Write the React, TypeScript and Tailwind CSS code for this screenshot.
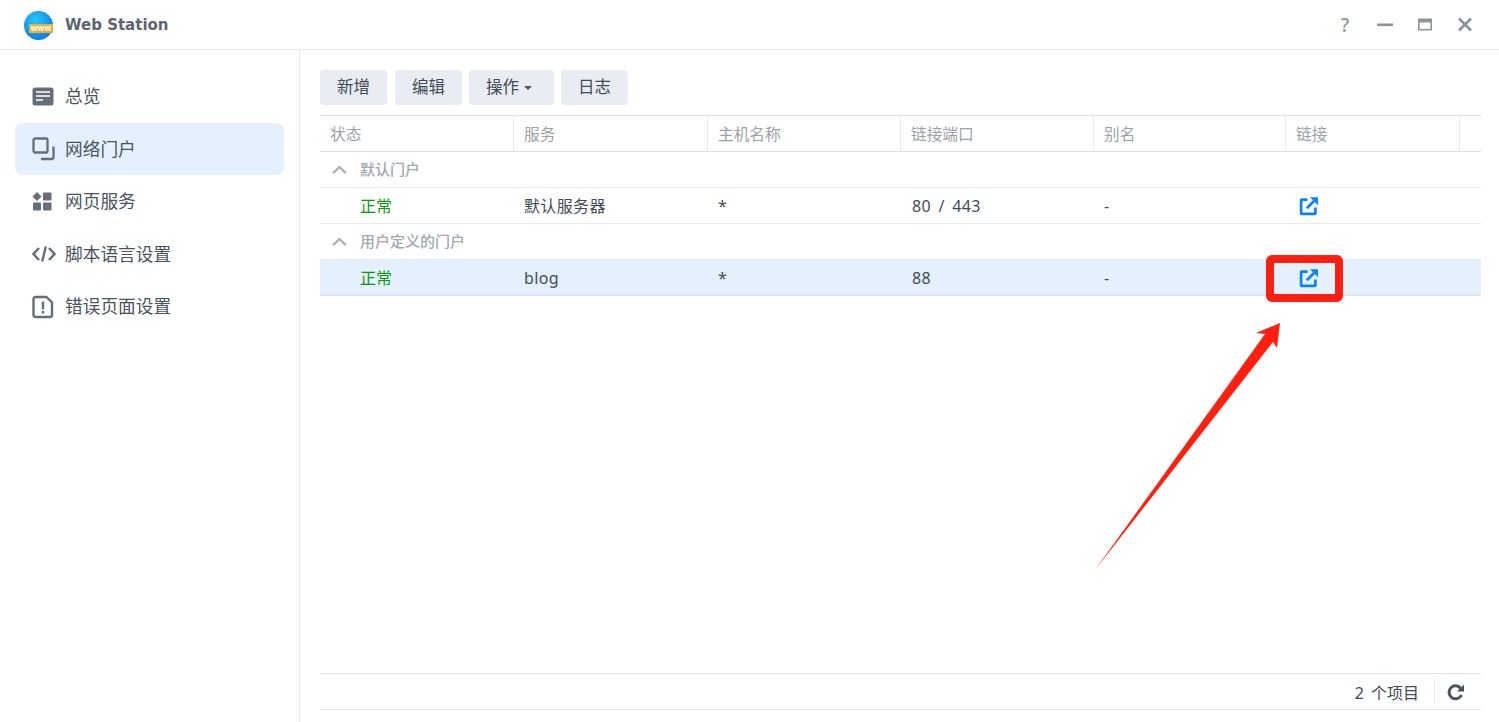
const cjk = "font-['Noto_Sans','Noto_Sans_CJK_SC',sans-serif]";

const columns = [
  { label: "状态", width: "w-[194px]" },
  { label: "服务", width: "w-[194px]" },
  { label: "主机名称", width: "w-[193px]" },
  { label: "链接端口", width: "w-[193px]" },
  { label: "别名", width: "w-[192px]" },
  { label: "链接", width: "w-[174px]" },
];

const rowCols = ["w-[194px] pl-10", "w-[194px] pl-[10px]", "w-[193px] pl-[10px]", "w-[193px] pl-[11px]", "w-[192px] pl-[10px]"];

function LinkIcon() {
  return (
    <svg width="20" height="20" viewBox="0 0 20 20" fill="none" stroke="#0a84f0" strokeWidth="2.7">
      <path d="M8.5 3.6H2.8a.7.7 0 0 0-.7.7v12.9a.7.7 0 0 0 .7.7h12.9a.7.7 0 0 0 .7-.7V11.5" strokeLinejoin="round" />
      <path d="M7.8 12.2 15 5" />
      <path d="M11 1.2H19V9.2Z" fill="#0a84f0" stroke="none" />
    </svg>
  );
}

function Chevron() {
  return (
    <svg width="15" height="9" viewBox="0 0 15 9" fill="none" stroke="#a9aeb5" strokeWidth="2.2">
      <path d="M1 8.2 7.5 2l6.5 6.2" />
    </svg>
  );
}

function GroupRow({ label }: { label: string }) {
  return (
    <div className="flex h-9 items-center border-b border-[#e8ebef] pl-[12px]">
      <Chevron />
      <span className="ml-[13px] text-[15px] font-medium text-[#a3a8af]">{label}</span>
    </div>
  );
}

function DataRow({ cells, selected }: { cells: string[]; selected?: boolean }) {
  return (
    <div className={`flex h-9 items-center border-b ${selected ? "border-[#d9e2ec] bg-[#e4f1fd]" : "border-[#e8ebef]"}`}>
      {cells.map((cell, i) => (
        <div
          key={i}
          className={`${rowCols[i]} ${i === 0 ? "text-[#0a9a0a]" : "tracking-[0.35px] text-[#414b55] [word-spacing:3px]"} text-[16px]`}
        >
          {cell}
        </div>
      ))}
      <div className="flex pl-[13px]">
        <LinkIcon />
      </div>
    </div>
  );
}

const navItems: { label: string; icon: React.ReactNode; active?: boolean }[] = [
  {
    label: "总览",
    icon: (
      <svg width="22" height="20" viewBox="0 0 22 20">
        <rect x="0.5" y="0.5" width="21" height="18" rx="2.5" fill="#666e79" />
        <path d="M4 5h14M4 9h14M4 13h7" stroke="#fff" strokeWidth="1.6" />
      </svg>
    ),
  },
  {
    label: "网络门户",
    active: true,
    icon: (
      <svg width="24" height="24" viewBox="0 0 24 24" fill="none" stroke="#666e79" strokeWidth="2.3">
        <rect x="1.5" y="1.5" width="14" height="14" rx="1.5" />
        <path d="M21.5 9.5v10.5a2 2 0 0 1-2 2H9" />
      </svg>
    ),
  },
  {
    label: "网页服务",
    icon: (
      <svg width="20" height="20" viewBox="0 0 20 20" fill="#666e79">
        <path d="M5 0 9.5 4.5 5 9 .5 4.5Z" />
        <rect x="11" y="0.5" width="8.5" height="8" rx="1" />
        <rect x="1" y="10.5" width="8" height="8" rx="1" />
        <rect x="11" y="10.5" width="8.5" height="8" rx="1" />
      </svg>
    ),
  },
  {
    label: "脚本语言设置",
    icon: (
      <svg width="24" height="18" viewBox="0 0 24 18" fill="none" stroke="#666e79" strokeWidth="2.4">
        <path d="M7 3 1.5 9 7 15M17 3l5.5 6L17 15M13.8 1.5 10.2 16.5" />
      </svg>
    ),
  },
  {
    label: "错误页面设置",
    icon: (
      <svg width="22" height="24" viewBox="0 0 22 24" fill="none" stroke="#666e79" strokeWidth="2.4">
        <path d="M3.5 2h11L20 7.5V20a2 2 0 0 1-2 2H3.5a2 2 0 0 1-2-2V4a2 2 0 0 1 2-2Z" strokeLinejoin="round" />
        <path d="M11 6.5v8" />
        <path d="M11 16v2.5" />
      </svg>
    ),
  },
];

export default function App() {
  return (
    <div className={`relative flex h-[722px] w-[1499px] flex-col overflow-hidden bg-white ${cjk}`}>
      {/* title bar */}
      <div className="flex h-[50px] shrink-0 items-center border-b border-[#e6e8eb] pl-6 pr-[24px] pt-px">
        <div className="relative h-[29px] w-[29px] rounded-full bg-[radial-gradient(circle_at_40%_30%,#22c8f8,#0a7fe8_75%)]">
          <div className="absolute left-[5px] top-[13px] flex h-[9px] w-[24px] items-center justify-center bg-[#f5ae2c] text-[8px] font-bold leading-none text-white">
            www
          </div>
        </div>
        <span className="ml-3 font-['DejaVu_Sans',sans-serif] text-[15px] font-bold text-[#5b6470]">Web Station</span>
        <div className="ml-auto flex items-center gap-[20px]">
          <span className="flex h-5 w-5 items-center justify-center text-[19px] font-medium leading-none text-[#8d949c]">?</span>
          <svg width="20" height="20" viewBox="0 0 20 20">
            <rect x="2" y="8.5" width="16" height="2.6" fill="#8d949c" />
          </svg>
          <svg width="20" height="20" viewBox="0 0 20 20">
            <rect x="3" y="3.5" width="14" height="12" fill="#8d949c" />
            <rect x="4.6" y="7.5" width="10.8" height="6.4" fill="#fff" />
          </svg>
          <svg width="20" height="20" viewBox="0 0 20 20" fill="none" stroke="#8d949c" strokeWidth="2.8">
            <path d="M4 3.5 16 15.5M16 3.5 4 15.5" />
          </svg>
        </div>
      </div>

      <div className="flex min-h-0 flex-1">
        {/* sidebar */}
        <div className="w-[300px] shrink-0 border-r border-[#e6e8eb] pl-[15px] pr-[15px] pt-[20.5px]">
          <div className="flex flex-col gap-[0.5px]">
            {navItems.map((item) => (
              <div
                key={item.label}
                className={`flex h-[52px] items-center rounded-lg pl-[17px] text-[17.7px] text-[#4a535e] ${item.active ? "bg-[#e4f1fd]" : ""}`}
              >
                <span className="flex w-[33px] justify-start">{item.icon}</span>
                {item.label}
              </div>
            ))}
          </div>
        </div>

        {/* main */}
        <div className="flex flex-1 flex-col pl-5 pr-[19px] pt-5">
          <div className="flex text-[16.5px] text-[#414b55]">
            <button className="flex h-[35px] w-[67px] items-center justify-center rounded bg-[#e9edf3] pb-px">新增</button>
            <button className="ml-2 flex h-[35px] w-[67px] items-center justify-center rounded bg-[#e9edf3] pb-px">编辑</button>
            <button className="ml-[7px] flex h-[35px] w-[85px] items-center rounded bg-[#e9edf3] pb-px pl-[17px]">
              操作
              <span className="ml-[5px] mt-[2px] h-0 w-0 border-x-[4px] border-t-[4px] border-x-transparent border-t-[#4a535e]" />
            </button>
            <button className="ml-[7px] flex h-[35px] w-[67px] items-center justify-center rounded bg-[#e9edf3] pb-px">日志</button>
          </div>

          <div className="mt-[10px] flex-1">
            <div className="flex h-[37px] border-y border-[#dde1e6] pr-[21px]">
              {columns.map((col) => (
                <div
                  key={col.label}
                  className={`${col.width} flex items-center border-r border-[#e8ebef] pl-[10px] pt-[2px] text-[15.7px] text-[#9ba1a9]`}
                >
                  {col.label}
                </div>
              ))}
            </div>
            <GroupRow label="默认门户" />
            <DataRow cells={["正常", "默认服务器", "*", "80 / 443", "-"]} />
            <GroupRow label="用户定义的门户" />
            <DataRow cells={["正常", "blog", "*", "88", "-"]} selected />
          </div>

          {/* footer */}
          <div className="mb-3 flex h-[37px] items-center justify-end border-y border-[#e1e5ea] text-[16px] text-[#414b55]">
            <span className="pt-[2px] [word-spacing:3px]">2 个项目</span>
            <div className="ml-[15px] h-[25px] w-px bg-[#e6e9ee]" />
            <svg className="ml-3 mr-[16px]" width="18" height="18" viewBox="0 0 18 18" fill="none" stroke="#4a535e" strokeWidth="3">
              <path d="M14.5 12a6.5 6.5 0 1 1-.6-6.4" />
              <path d="M17 1.5v7h-7Z" fill="#4a535e" stroke="none" />
            </svg>
          </div>
        </div>
      </div>

      {/* annotations over the page */}
      <div className="absolute left-[1266px] top-[255px] h-[47px] w-[77px] rounded-md border-[8px] border-[#ff1f10]" />
      <svg className="absolute left-0 top-0" width="1499" height="722">
        <path d="M1095 570 1265 334 1256 333 1280 323 1277 348 1273 342Z" fill="#ff2010" />
      </svg>
    </div>
  );
}
